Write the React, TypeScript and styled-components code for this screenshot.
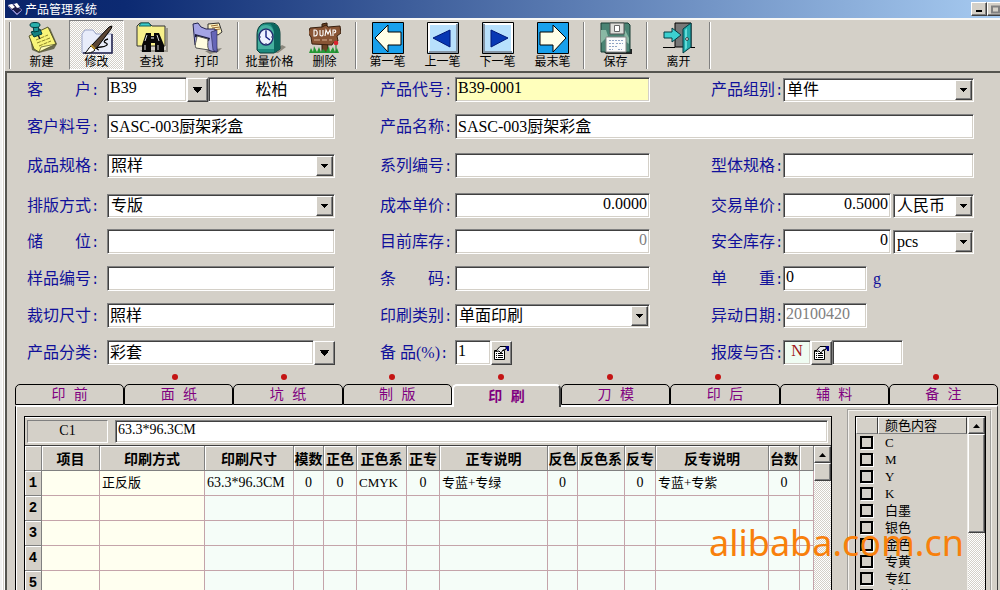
import React from 'react';
import styled, { createGlobalStyle, css } from 'styled-components';

const face = '#d4d0c8';
const navy = '#10109a';
const textFont = '"Liberation Serif", "Noto Sans CJK SC", serif';
const uiFont = '"Noto Sans CJK SC", sans-serif';

const Global = createGlobalStyle`
  *, *::before, *::after { box-sizing: border-box; }
  body { margin: 0; background: ${face}; overflow: hidden; }
  button, input, select { font: inherit; color: inherit; margin: 0; padding: 0; border-radius: 0; }
`;

const sunken = css`
  border: 1px solid;
  border-color: #808080 #fff #fff #808080;
  box-shadow: inset 1px 1px 0 #404040, inset -1px -1px 0 ${face};
`;

const raised = css`
  border: 1px solid;
  border-color: #fff #404040 #404040 #fff;
  box-shadow: inset -1px -1px 0 #808080;
  background: ${face};
`;

const checker = css`
  background: repeating-conic-gradient(#fff 0 25%, ${face} 0 50%) 0 0 / 2px 2px;
`;

const App_ = styled.div`
  position: relative;
  height: 100vh;
  display: flex;
  flex-direction: column;
  overflow: hidden;
  border-left: 2px solid #f2f2f0;
  font: 400 16px/20px ${textFont};
  color: #000;
`;

const Frame = styled.div`
  flex: 1;
  min-height: 0;
  display: flex;
  flex-direction: column;
  background: ${face};
  border-left: 3px double #fff;
`;

const TitleBar = styled.header`
  height: 20px;
  flex: none;
  display: flex;
  align-items: center;
  gap: 2px;
  padding-left: 2px;
  border-bottom: 2px solid #f8f8f6;
  background: linear-gradient(90deg, #0a246a, #0c2a72 12%, #a6caf0);
  overflow: hidden;
`;

const Title = styled.h1`
  flex: 1;
  margin: 0;
  font: 400 12px/16px ${uiFont};
  color: #fff;
`;

const WindowButtons = styled.div`
  width: 29px;
  display: flex;
  overflow: hidden;
`;

const WindowButton = styled.button`
  ${raised}
  flex: none;
  width: 16px;
  height: 14px;
  display: grid;
  place-items: center;
`;

const Toolbar = styled.nav`
  height: 51px;
  flex: none;
  display: flex;
  align-items: stretch;
  padding: 0 0 1px 1px;
`;

const Separator = styled.span`
  width: 8px;
  display: flex;
  justify-content: center;
  padding: 2px 0 1px;
  &::before {
    content: '';
    border-left: 1px solid #808080;
    border-right: 1px solid #fff;
  }
`;

const ToolButton = styled.button<{ $pressed?: boolean }>`
  width: 55px;
  display: flex;
  flex-direction: column;
  align-items: center;
  border: 1px solid transparent;
  background: transparent;
  padding-top: 1px;
  font: 400 12px/14px ${uiFont};
  white-space: nowrap;
  ${(p) => p.$pressed && css`
    ${checker}
    border-color: #808080 #fff #fff #808080;
  `}
  svg { flex: none; }
`;

const Main = styled.main`
  flex: 1;
  min-height: 0;
  display: flex;
  flex-direction: column;
  border-top: 2px solid #55554f;
  border-left: 2px solid #55554f;
`;

const Form = styled.form`
  flex: none;
  display: grid;
  grid-template-columns: 308fr 45px 270fr 61px 263fr;
  grid-template-rows: 37px 39px 40px 36px 37px 37px 37px 34px;
  padding: 4px 26px 0 20px;
`;

const labelWidths = { 1: 80, 3: 75, 5: 72 };

const Field = styled.div<{ $col: 1 | 3 | 5; $row: number; $wide?: boolean }>`
  grid-row: ${(p) => p.$row};
  grid-column: ${(p) => p.$col} / ${(p) => (p.$wide ? 6 : p.$col + 1)};
  display: grid;
  grid-template-columns: ${(p) => labelWidths[p.$col]}px 1fr;
  align-items: center;
  height: 25px;
`;

const Label = styled.label`
  padding-top: 2px;
  color: ${navy};
  white-space: nowrap;
`;

const Colon = styled.span`
  font-family: "Liberation Mono", monospace;
  font-size: 14px;
`;

const Controls = styled.div`
  display: flex;
  align-items: center;
  height: 25px;
  min-width: 0;
`;

const Text = styled.input<{ $basis?: number; $align?: string; $bg?: string; $ink?: string }>`
  ${sunken}
  flex: ${(p) => (p.$basis ? `0 0 ${p.$basis}px` : '1 1 0')};
  min-width: 0;
  height: 25px;
  padding: 0 2px 3px;
  outline: 0;
  background: ${(p) => p.$bg || '#fff'};
  color: ${(p) => p.$ink || '#000'};
  text-align: ${(p) => p.$align || 'left'};
`;

const SelectBox = styled.div<{ $basis?: number }>`
  ${sunken}
  flex: ${(p) => (p.$basis ? `0 0 ${p.$basis}px` : '1 1 0')};
  min-width: 0;
  height: 24px;
  display: grid;
  padding: 1px;
  background: #fff;
`;

const NativeSelect = styled.select`
  grid-area: 1 / 1;
  appearance: none;
  border: 0;
  outline: 0;
  background: transparent;
  padding: 0 18px 0 2px;
  min-width: 0;
`;

const SelectArrow = styled.span`
  ${raised}
  grid-area: 1 / 1;
  justify-self: end;
  width: 17px;
  display: grid;
  place-items: center;
  pointer-events: none;
`;

const SmallButton = styled.button`
  ${raised}
  flex: none;
  width: 21px;
  height: 24px;
  display: grid;
  place-items: center;
`;

const Gap = styled.span`
  flex: none;
  width: 2px;
`;

const Unit = styled.span`
  padding-left: 6px;
  color: ${navy};
`;

const Marks = styled.div`
  flex: none;
  height: 10px;
  display: grid;
  grid-template-columns: repeat(9, 1fr);
  justify-items: center;
  margin: 0 10px 0 5px;
`;

const Mark = styled.span<{ $on: boolean }>`
  width: 6px;
  height: 6px;
  border-radius: 3px;
  background: ${(p) => (p.$on ? '#c41414' : 'transparent')};
`;

const Tabs = styled.div`
  flex: none;
  height: 21px;
  display: grid;
  grid-template-columns: repeat(9, 1fr);
  margin: 0 2px 0 8px;
`;

const Tab = styled.button<{ $active: boolean }>`
  border: 1px solid #000;
  border-radius: 5px 5px 0 0;
  background: ${face};
  color: #800080;
  font: 400 14px/18px "Liberation Mono", "Noto Sans CJK SC", monospace;
  ${(p) => p.$active && css`
    border-color: #fff #404040 ${face} #fff;
    border-width: 2px 2px 0 2px;
    margin-bottom: -2px;
    font-weight: 700;
    z-index: 1;
  `}
`;

const Page = styled.section`
  flex: 1;
  min-height: 0;
  display: flex;
  gap: 15px;
  margin: 0 2px 0 8px;
  padding: 2px 5px 0 8px;
  border-top: 2px solid #fff;
  border-left: 1px solid #000;
  border-right: 1px solid #404040;
  box-shadow: inset 1px 0 0 #fff;
`;

const Sheet = styled.div`
  flex: 1;
  min-width: 0;
  margin-top: 7px;
  display: flex;
  flex-direction: column;
  border: 1px solid #000;
  border-bottom: 0;
`;

const FormulaBar = styled.div`
  flex: none;
  height: 28px;
  display: flex;
  align-items: center;
  gap: 7px;
  padding: 0 3px 0 2px;
  border-top: 1px solid #fff;
  font-size: 14px;
  input { height: 23px; }
`;

const CellName = styled.output`
  width: 81px;
  height: 23px;
  border: 1px solid;
  border-color: #808080 #fff #fff #808080;
  text-align: center;
  line-height: 20px;
`;

const SheetBody = styled.div`
  flex: 1;
  min-height: 0;
  display: flex;
  overflow: hidden;
  border-top: 1px solid #404040;
`;

const TableArea = styled.div`
  flex: 1;
  min-width: 0;
  overflow: hidden;
`;

const Table = styled.table`
  width: 100%;
  table-layout: fixed;
  border-collapse: separate;
  border-spacing: 0;
  td, th { padding: 0; height: 25px; white-space: nowrap; overflow: hidden; }
`;

const Head = styled.th`
  background: ${face};
  border-right: 1px solid #808080;
  border-bottom: 1px solid #808080;
  box-shadow: inset 1px 1px 0 #fff;
  font: 700 14px/20px ${uiFont};
`;

const RowHead = styled(Head)`
  font: 700 14px/20px "Liberation Mono", monospace;
`;

const Cell = styled.td<{ $cream: boolean; $num: boolean; $center: boolean }>`
  border-right: 1px solid #c4a4aa;
  border-bottom: 1px solid #c4a4aa;
  background: ${(p) => (p.$cream ? '#fffff0' : '#f5fdf8')};
  font-size: ${(p) => (p.$num ? 14 : 13)}px;
  text-align: ${(p) => (p.$center ? 'center' : 'left')};
  && { padding-left: ${(p) => (p.$center ? 0 : 2)}px; }
`;

const ScrollColumn = styled.div`
  ${checker}
  flex: none;
  width: 17px;
  display: flex;
  flex-direction: column;
`;

const ScrollButton = styled.button`
  ${raised}
  height: 17px;
  display: grid;
  place-items: center;
`;

const Thumb = styled.div<{ $h: number }>`
  ${raised}
  height: ${(p) => p.$h}px;
`;

const ListFrame = styled.aside`
  flex: none;
  width: 145px;
  display: flex;
  padding: 5px 4px 0 6px;
  border: 2px groove #f4f2ee;
  border-bottom: 0;
`;

const ListBox = styled.div`
  flex: 1;
  display: flex;
  border: 1px solid #000;
  border-bottom: 0;
  overflow: hidden;
  font-size: 13px;
`;

const ListMain = styled.div`
  flex: 1;
  min-width: 0;
  border-right: 1px solid #f0eeea;
`;

const ListHead = styled.div`
  display: grid;
  grid-template-columns: 22px 1fr;
  height: 17px;
  line-height: 15px;
  span {
    border: 1px solid;
    border-color: #fff #404040 #808080 #fff;
    padding-left: 6px;
  }
`;

const List = styled.ul`
  list-style: none;
  margin: 0;
  padding: 0;
`;

const Option = styled.label`
  display: flex;
  align-items: center;
  gap: 12px;
  height: 17px;
  padding-left: 4px;
  line-height: 17px;
`;

const Check = styled.input`
  appearance: none;
  width: 13px;
  height: 13px;
  border: 2px solid #000;
  background: ${face};
  box-shadow: 1px 1px 0 #fff;
`;

const Watermark = styled.div`
  position: absolute;
  right: 36px;
  bottom: 22px;
  font: 400 36px/50px "Noto Sans", sans-serif;
  color: #f8800c;
  pointer-events: none;
`;

const Down = ({ big = false }: { big?: boolean }) => (
  <svg width={big ? 11 : 7} height={big ? 6 : 4} viewBox="0 0 7 4" shapeRendering="crispEdges" aria-hidden>
    <path d="M0 0h7L3.5 4z" />
  </svg>
);

const Up = () => (
  <svg width="7" height="4" viewBox="0 0 7 4" aria-hidden><path d="M0 4h7L3.5 0z" /></svg>
);

const Lookup = () => (
  <svg width="17" height="15" viewBox="0 0 17 15" aria-hidden>
    <path d="M1.5 5.5h10v9h-10z" fill="#fff" stroke="#000" />
    <path d="M2.5 6.5L7 1.5h6v3l-3 .5-2 3-2-2z" fill="#eee" stroke="#000" />
    <path d="M13 1h3v5h-2V4h-1z" fill="#000080" />
    <path d="M3 8.5h1M5 8.5h5M3 10.5h1M5 10.5h5M3 12.5h1M5 12.5h5" stroke="#000" />
  </svg>
);

const icons: Record<string, React.ReactNode> = {
  note: (
    <>
      <path d="M4 15l20-9 7 16-3 5-15 4L6 28z" fill="#6b6b52" />
      <path d="M3 14l19-9 8 17-17 8-5-3z" fill="#f8f478" stroke="#55552a" />
      <path d="M13 30l2-5 15-3z" fill="#fffcb8" stroke="#55552a" strokeWidth=".7" />
      <path d="M10 18l12-5M11 21l13-5M13 24l12-5" stroke="#8c8428" strokeDasharray="4 1" />
      <path d="M11 11l3 6" stroke="#222" strokeWidth="1.5" />
      <path d="M5 10l9-3 2 5-8 3z" fill="#138080" stroke="#013c40" />
      <path d="M7 4l5-1 1 6-5 1z" fill="#1d9a9a" stroke="#013c40" />
      <ellipse cx="9" cy="3" rx="5" ry="2.5" fill="#28b0ac" stroke="#013c40" />
    </>
  ),
  edit: (
    <>
      <path d="M1 31V12l3-4h8l3 4h16v19z" fill="#e8ecfa" stroke="#9aa4c8" />
      <path d="M31 12v19H2" fill="none" stroke="#20204a" strokeWidth="1.5" />
      <path d="M4 31c2-1 4-6 6-7l4 4c-3 3-6 3-10 3z" fill="#fff" stroke="#000" />
      <path d="M11 23L28 5l3-1-1 3-15 20z" fill="#5b4636" stroke="#000" />
      <path d="M10 23l4 4" stroke="#b89030" strokeWidth="2" />
      <path d="M27 17c-4 1-5 3-2 4s0 4-5 4-5 2-2 3" fill="none" stroke="#000" strokeWidth="1.3" />
    </>
  ),
  find: (
    <>
      <path d="M4 28h26V6h2v24H6z" fill="#9a968c" />
      <path d="M1 24V4l3-3h9l3 3h13v20z" fill="#f7f08a" stroke="#333" />
      <path d="M3 4l2-3h8l2 3z" fill="#38cccc" stroke="#146060" />
      <path d="M10 11h5v3h3v-3h5l5 12v7h-9v-9h-4v9H6v-7z" fill="#080808" />
      <path d="M11 13l-2 6M21 13l2 6M9 23v5M22 23v5" stroke="#d8d8d8" />
      <path d="M15 16h3" stroke="#888" strokeWidth="2" />
    </>
  ),
  print: (
    <>
      <path d="M14 29l17-3-4 4-8 2z" fill="#88847a" />
      <path d="M17 2l11-1 3 9-4 3-10-4z" fill="#fff5c0" stroke="#333" />
      <path d="M20 4l7-1M21 6l8-1M22 8l7-1" stroke="#9a6a30" />
      <path d="M2 2l5-1 3 4 5 2 9 0 2 23-6-1L4 23z" fill="#a4a4e4" stroke="#22224e" />
      <path d="M20 10l6-2v22l-4-2z" fill="#6666b8" stroke="#22224e" strokeWidth=".6" />
      <path d="M4 12l15 4-1 3-14-4z" fill="#18183c" />
      <path d="M6 14l11 3c0 5-1 8 1 11L5 26c-2-3 1-8 1-12z" fill="#fffce0" stroke="#555" />
    </>
  ),
  clock: (
    <>
      <path d="M17 31l11-8 4 2-8 6z" fill="#8c887e" />
      <path d="M3 28V13C3 5 7 1 13 1h5c5 0 8 5 8 11v15l-6 4H6z" fill="#1c8a7e" stroke="#083c38" />
      <path d="M20 31V12c0-6-2-9-5-11 8 0 11 5 11 11v15z" fill="#0c665e" />
      <path d="M4 27V13C4 6 7 3 12 3s8 4 8 10v14z" fill="#46b0a0" />
      <ellipse cx="12" cy="15" rx="7" ry="8" fill="#eef2ff" stroke="#223070" strokeWidth="1.5" />
      <path d="M12 9v6l4 3" fill="none" stroke="#142080" strokeWidth="1.4" />
      <path d="M12 8v1M12 21v1M6 15h1M17 15h1" stroke="#223070" />
    </>
  ),
  dump: (
    <>
      <path d="M13 2l5-1 1 29h-6z" fill="#6c4424" stroke="#2e1a0c" />
      <path d="M1 6l12-1 4-2 2 2 12-1 1 7-4 3 1 5-5 2-1 2-20-1-1-7-3-4z" fill="#885434" stroke="#38200f" />
      <path d="M5 8v6h1c3 0 3-6 0-6zM11 8v5q2 2 3 0V8M16 14l1-6 2 4 2-4 1 6M24 14V8h2q2 2-1 3" fill="none" stroke="#fff" strokeWidth="1.1" />
      <path d="M5 18h6M13 18h5M20 18h3" stroke="#d8b090" />
      <path d="M0 31l2-5 2 4 1-6 3 6 2-5 2 5 2-3 3 3 3-6 1 6 3-5 2 5 2-4 2 5z" fill="#249834" />
      <path d="M27 31v-9" stroke="#187828" />
      <circle cx="27" cy="21" r="2.3" fill="#dc2430" />
    </>
  ),
  first: (
    <>
      <path d="M.5 .5h31v31H.5z" fill="#18a0ec" stroke="#000" />
      <path d="M3 16L16 3v7h13v13H16v7z" fill="#ffffe8" stroke="#000" />
    </>
  ),
  prev: (
    <>
      <path d="M.5 .5h31v31H.5z" fill="#b8e0fc" stroke="#000" />
      <path d="M2 30V2h28" fill="none" stroke="#fff" strokeWidth="2" />
      <path d="M30 2v28H2" fill="none" stroke="#8494a4" strokeWidth="2" />
      <path d="M6 16L23 8v17z" fill="#0838b4" stroke="#001878" />
    </>
  ),
  save: (
    <>
      <path d="M4 30h26v-3h2v5H6z" fill="#222" />
      <path d="M1 1h27l2 2v27H1z" fill="#4a8474" stroke="#183c34" />
      <path d="M1 8h5l2 6-7 7zM25 8l4 8v6l-5-4z" fill="#8ab8a4" />
      <path d="M10 1h14v11H10z" fill="#dcdcd8" stroke="#555" />
      <path d="M14.5 3.5h5v6h-5z" fill="#fff" stroke="#666" />
      <path d="M6 15h20v15H6z" fill="#fbfbfb" stroke="#888" />
      <path d="M9 18.5h14M9 21.5h5M16 21.5h7M9 24.5h8M9 27.5h4M18 27.5h4" stroke="#90a4c4" strokeDasharray="2 1" />
    </>
  ),
  exit: (
    <>
      <path d="M0 25.5h12M27 25.5h5" stroke="#000" />
      <path d="M12 1h16v24H12z" fill="#777" stroke="#000" />
      <path d="M20 7l8-6v24l-8 6z" fill="#22acac" stroke="#023c44" />
      <path d="M22 8l2-2v20l-2 2z" fill="#64dcd8" />
      <circle cx="24" cy="17" r="1.4" fill="#fff" stroke="#000" strokeWidth=".7" />
      <path d="M1 10h8V6l9 7-9 7v-4H1z" fill="#3cd0d0" stroke="#023c44" />
    </>
  ),
};

const Icon = ({ name }: { name: string }) => {
  const flip = name === 'next' || name === 'last';
  const key = name === 'next' ? 'prev' : name === 'last' ? 'first' : name;
  return (
    <svg width="32" height="32" viewBox="0 0 32 32" fill="none" aria-hidden>
      {flip ? <g transform="translate(32 0) scale(-1 1)">{icons[key]}</g> : icons[key]}
    </svg>
  );
};

const tools: (readonly [string, string])[][] = [
  [['note', '新建'], ['edit', '修改'], ['find', '查找'], ['print', '打印']],
  [['clock', '批量价格'], ['dump', '删除']],
  [['first', '第一笔'], ['prev', '上一笔'], ['next', '下一笔'], ['last', '最末笔']],
  [['save', '保存']],
  [['exit', '离开']],
];

const tabs = ['印 前', '面 纸', '坑 纸', '制 版', '印 刷', '刀 模', '印 后', '辅 料', '备 注'];
const marked = [false, true, true, true, true, true, true, false, true];

const columns: { title: string; width?: number; value?: string; text?: boolean; left?: boolean }[] = [
  { title: '项目', width: 58 },
  { title: '印刷方式', width: 105, value: '正反版', text: true, left: true },
  { title: '印刷尺寸', width: 89, value: '63.3*96.3CM', left: true },
  { title: '模数', width: 30, value: '0' },
  { title: '正色', width: 33, value: '0' },
  { title: '正色系', width: 50, value: 'CMYK', text: true, left: true },
  { title: '正专', width: 33, value: '0' },
  { title: '正专说明', width: 108, value: '专蓝+专绿', text: true, left: true },
  { title: '反色', width: 30, value: '0' },
  { title: '反色系', width: 47 },
  { title: '反专', width: 31, value: '0' },
  { title: '反专说明', width: 113, value: '专蓝+专紫', text: true, left: true },
  { title: '台数', width: 31, value: '0' },
  { title: '' },
];

const colours = ['C', 'M', 'Y', 'K', '白墨', '银色', '金色', '专黄', '专红', '专蓝'];

type RowProps = {
  col: 1 | 3 | 5;
  row: number;
  id: string;
  label: string;
  wide?: boolean;
  children: React.ReactNode;
};

const Row = ({ col, row, id, label, wide, children }: RowProps) => (
  <Field $col={col} $row={row} $wide={wide}>
    <Label htmlFor={id}>{label}<Colon>:</Colon></Label>
    <Controls>{children}</Controls>
  </Field>
);

const Select = ({ id, value, basis, name }: { id: string; value: string; basis?: number; name?: string }) => (
  <SelectBox $basis={basis}>
    <NativeSelect id={id} aria-label={name}><option>{value}</option></NativeSelect>
    <SelectArrow><Down /></SelectArrow>
  </SelectBox>
);

export default function App() {
  return (
    <App_>
      <Global />
      <Frame>
        <TitleBar>
          <svg width="16" height="15" viewBox="0 0 16 15" aria-hidden>
            <path d="M1 4l6-2 8 6-5 5z" fill="#1a1a48" stroke="#7070b0" />
            <path d="M1 3l4-1 3 3-3 2zM7 2l3-1 3 4-3 1z" fill="#fff" />
            <path d="M6 8l4 4 4-3" fill="none" stroke="#9090d8" />
          </svg>
          <Title>产品管理系统</Title>
          <WindowButtons>
            <WindowButton aria-label="最小化">
              <svg width="8" height="8"><path d="M1 5h6v2H1z" /></svg>
            </WindowButton>
            <WindowButton aria-label="最大化">
              <svg width="9" height="9"><path d="M1 1.5h7v6H1z" fill="none" stroke="#808080" strokeWidth="2" /></svg>
            </WindowButton>
          </WindowButtons>
        </TitleBar>

        <Toolbar>
          {tools.map((group, i) => (
            <React.Fragment key={i}>
              <Separator />
              {group.map(([icon, caption]) => (
                <ToolButton key={icon} $pressed={icon === 'edit'}>
                  <Icon name={icon} />
                  {caption}
                </ToolButton>
              ))}
            </React.Fragment>
          ))}
          <Separator />
        </Toolbar>

        <Main>
          <Form>
            <Row col={1} row={1} id="customer" label="客　　户">
              <Text id="customer" defaultValue="B39" $basis={80} />
              <SmallButton type="button" aria-label="选择客户"><Down big /></SmallButton>
              <Text aria-label="客户名称" defaultValue="松柏" $align="center" />
            </Row>
            <Row col={1} row={2} id="material" label="客户料号">
              <Text id="material" defaultValue="SASC-003厨架彩盒" />
            </Row>
            <Row col={1} row={3} id="spec" label="成品规格"><Select id="spec" value="照样" /></Row>
            <Row col={1} row={4} id="layout" label="排版方式"><Select id="layout" value="专版" /></Row>
            <Row col={1} row={5} id="store" label="储　　位"><Text id="store" /></Row>
            <Row col={1} row={6} id="sample" label="样品编号"><Text id="sample" /></Row>
            <Row col={1} row={7} id="cut" label="裁切尺寸"><Text id="cut" defaultValue="照样" /></Row>
            <Row col={1} row={8} id="category" label="产品分类">
              <Text id="category" defaultValue="彩套" />
              <SmallButton type="button" aria-label="选择分类"><Down big /></SmallButton>
            </Row>

            <Row col={3} row={1} id="code" label="产品代号">
              <Text id="code" defaultValue="B39-0001" $bg="#ffffbc" />
            </Row>
            <Row col={3} row={2} id="name" label="产品名称" wide>
              <Text id="name" defaultValue="SASC-003厨架彩盒" />
            </Row>
            <Row col={3} row={3} id="series" label="系列编号"><Text id="series" /></Row>
            <Row col={3} row={4} id="cost" label="成本单价">
              <Text id="cost" defaultValue="0.0000" $align="right" />
            </Row>
            <Row col={3} row={5} id="stock" label="目前库存">
              <Text id="stock" defaultValue="0" readOnly $align="right" $ink="#808080" />
            </Row>
            <Row col={3} row={6} id="barcode" label="条　　码"><Text id="barcode" /></Row>
            <Row col={3} row={7} id="kind" label="印刷类别"><Select id="kind" value="单面印刷" /></Row>
            <Row col={3} row={8} id="spare" label="备 品(%)">
              <Text id="spare" defaultValue="1" $basis={36} />
              <SmallButton type="button" aria-label="备品查询"><Lookup /></SmallButton>
            </Row>

            <Row col={5} row={1} id="group" label="产品组别"><Select id="group" value="单件" /></Row>
            <Row col={5} row={3} id="model" label="型体规格"><Text id="model" /></Row>
            <Row col={5} row={4} id="price" label="交易单价">
              <Text id="price" defaultValue="0.5000" $align="right" />
              <Gap />
              <Select id="currency" name="币别" value="人民币" basis={81} />
            </Row>
            <Row col={5} row={5} id="safe" label="安全库存">
              <Text id="safe" defaultValue="0" $align="right" />
              <Gap />
              <Select id="unit" name="单位" value="pcs" basis={81} />
            </Row>
            <Row col={5} row={6} id="weight" label="单　　重">
              <Text id="weight" defaultValue="0" $basis={84} />
              <Unit>g</Unit>
            </Row>
            <Row col={5} row={7} id="date" label="异动日期">
              <Text id="date" defaultValue="20100420" readOnly $basis={84} $ink="#808080" />
            </Row>
            <Row col={5} row={8} id="scrap" label="报废与否">
              <Text id="scrap" defaultValue="N" $basis={28} $align="center" $bg="#effcf2" $ink="#a01818" />
              <SmallButton type="button" aria-label="报废查询"><Lookup /></SmallButton>
              <Text aria-label="报废说明" $basis={71} />
            </Row>
          </Form>

          <Marks>{marked.map((on, i) => <Mark key={i} $on={on} />)}</Marks>
          <Tabs role="tablist">
            {tabs.map((tab, i) => (
              <Tab key={tab} role="tab" aria-selected={i === 4} $active={i === 4}>{tab}</Tab>
            ))}
          </Tabs>

          <Page>
            <Sheet>
              <FormulaBar>
                <CellName>C1</CellName>
                <Text aria-label="单元格内容" defaultValue="63.3*96.3CM" />
              </FormulaBar>
              <SheetBody>
                <TableArea>
                  <Table>
                    <colgroup>
                      <col style={{ width: 17 }} />
                      {columns.map((c, i) => <col key={i} style={{ width: c.width }} />)}
                    </colgroup>
                    <thead>
                      <tr>
                        <Head />
                        {columns.map((c, i) => <Head key={i} scope="col">{c.title}</Head>)}
                      </tr>
                    </thead>
                    <tbody>
                      {[1, 2, 3, 4, 5].map((n) => (
                        <tr key={n}>
                          <RowHead scope="row">{n}</RowHead>
                          {columns.map((c, i) => (
                            <Cell key={i} $cream={i < 2} $num={!c.text} $center={!c.left}>
                              {n === 1 ? c.value : ''}
                            </Cell>
                          ))}
                        </tr>
                      ))}
                    </tbody>
                  </Table>
                </TableArea>
                <ScrollColumn>
                  <ScrollButton aria-label="向上滚动"><Up /></ScrollButton>
                  <Thumb $h={18} />
                </ScrollColumn>
              </SheetBody>
            </Sheet>

            <ListFrame>
              <ListBox>
                <ListMain>
                  <ListHead><span /><span>颜色内容</span></ListHead>
                  <List>
                    {colours.map((c) => (
                      <li key={c}><Option><Check type="checkbox" />{c}</Option></li>
                    ))}
                  </List>
                </ListMain>
                <ScrollColumn>
                  <ScrollButton aria-label="向上滚动"><Up /></ScrollButton>
                  <Thumb $h={99} />
                </ScrollColumn>
              </ListBox>
            </ListFrame>
          </Page>
        </Main>
      </Frame>
      <Watermark>alibaba.com.cn</Watermark>
    </App_>
  );
}
